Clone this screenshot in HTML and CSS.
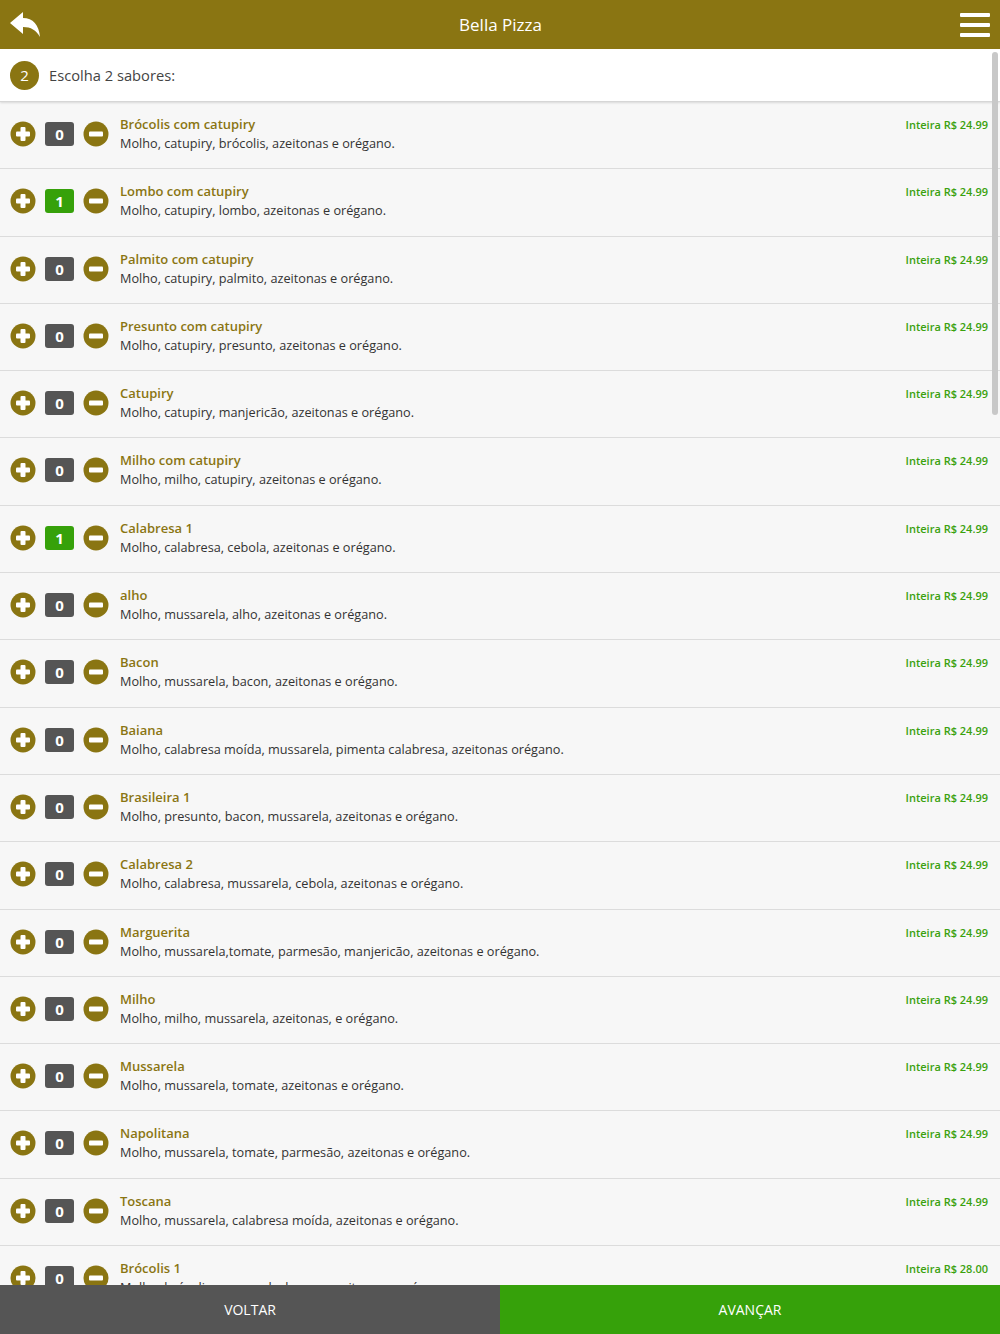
FILE: index.html
```
<!DOCTYPE html>
<html lang="pt-BR">
<head>
    <meta charset="UTF-8">
    <meta name="viewport" content="width=device-width, initial-scale=1.0">
    <title>Bella Pizza</title>
    <link rel="stylesheet" href="styles.css">
</head>
<body>
    <div class="app">
        <header class="topbar">
            <button class="back-btn" aria-label="Voltar">
                <svg width="32" height="28" viewBox="0 0 32 28">
                    <path d="M1 12 L14 1 L14 7 C24 7 30 14 31 26 C27 19 22 16 14 16 L14 23 Z" fill="#fff"/>
                </svg>
            </button>
            <h1 class="title">Bella Pizza</h1>
            <button class="menu-btn" aria-label="Menu">
                <span></span><span></span><span></span>
            </button>
        </header>

        <div class="content">
            <div class="step">
                <span class="step-num">2</span>
                <span class="step-text">Escolha 2 sabores:</span>
            </div>

            <ul id="list" class="list"></ul>

            <div class="scroll-thumb"></div>
        </div>

        <footer class="actions">
            <button class="btn-back">VOLTAR</button>
            <button class="btn-next">AVANÇAR</button>
        </footer>
    </div>

    <script>
        const flavors = [
            { name: 'Brócolis com catupiry', desc: 'Molho, catupiry, brócolis, azeitonas e orégano.', qty: 0, price: '24.99' },
            { name: 'Lombo com catupiry', desc: 'Molho, catupiry, lombo, azeitonas e orégano.', qty: 1, price: '24.99' },
            { name: 'Palmito com catupiry', desc: 'Molho, catupiry, palmito, azeitonas e orégano.', qty: 0, price: '24.99' },
            { name: 'Presunto com catupiry', desc: 'Molho, catupiry, presunto, azeitonas e orégano.', qty: 0, price: '24.99' },
            { name: 'Catupiry', desc: 'Molho, catupiry, manjericão, azeitonas e orégano.', qty: 0, price: '24.99' },
            { name: 'Milho com catupiry', desc: 'Molho, milho, catupiry, azeitonas e orégano.', qty: 0, price: '24.99' },
            { name: 'Calabresa 1', desc: 'Molho, calabresa, cebola, azeitonas e orégano.', qty: 1, price: '24.99' },
            { name: 'alho', desc: 'Molho, mussarela, alho, azeitonas e orégano.', qty: 0, price: '24.99' },
            { name: 'Bacon', desc: 'Molho, mussarela, bacon, azeitonas e orégano.', qty: 0, price: '24.99' },
            { name: 'Baiana', desc: 'Molho, calabresa moída, mussarela, pimenta calabresa, azeitonas orégano.', qty: 0, price: '24.99' },
            { name: 'Brasileira 1', desc: 'Molho, presunto, bacon, mussarela, azeitonas e orégano.', qty: 0, price: '24.99' },
            { name: 'Calabresa 2', desc: 'Molho, calabresa, mussarela, cebola, azeitonas e orégano.', qty: 0, price: '24.99' },
            { name: 'Marguerita', desc: 'Molho, mussarela,tomate, parmesão, manjericão, azeitonas e orégano.', qty: 0, price: '24.99' },
            { name: 'Milho', desc: 'Molho, milho, mussarela, azeitonas, e orégano.', qty: 0, price: '24.99' },
            { name: 'Mussarela', desc: 'Molho, mussarela, tomate, azeitonas e orégano.', qty: 0, price: '24.99' },
            { name: 'Napolitana', desc: 'Molho, mussarela, tomate, parmesão, azeitonas e orégano.', qty: 0, price: '24.99' },
            { name: 'Toscana', desc: 'Molho, mussarela, calabresa moída, azeitonas e orégano.', qty: 0, price: '24.99' },
            { name: 'Brócolis 1', desc: 'Molho, brócolis, mussarela, bacon, azeitonas e orégano.', qty: 0, price: '28.00' }
        ];

        const plusIcon = '<svg width="26" height="26" viewBox="0 0 26 26"><circle cx="13" cy="13" r="12.5" fill="#8a7512"/><rect x="6" y="10.5" width="14" height="5" rx="1" fill="#fff"/><rect x="10.5" y="6" width="5" height="14" rx="1" fill="#fff"/></svg>';
        const minusIcon = '<svg width="26" height="26" viewBox="0 0 26 26"><circle cx="13" cy="13" r="12.5" fill="#8a7512"/><rect x="6" y="10.5" width="14" height="5" rx="1" fill="#fff"/></svg>';

        function render() {
            const list = document.getElementById('list');
            list.innerHTML = '';

            flavors.forEach((f) => {
                const li = document.createElement('li');
                li.className = 'item';

                const qtyClass = f.qty > 0 ? 'qty qty-on' : 'qty';

                li.innerHTML =
                    '<div class="stepper">' +
                        '<button class="round-btn plus">' + plusIcon + '</button>' +
                        '<span class="' + qtyClass + '">' + f.qty + '</span>' +
                        '<button class="round-btn minus">' + minusIcon + '</button>' +
                    '</div>' +
                    '<div class="info">' +
                        '<div class="name">' + f.name + '</div>' +
                        '<div class="desc">' + f.desc + '</div>' +
                    '</div>' +
                    '<div class="price">Inteira R$ ' + f.price + '</div>';

                li.querySelector('.plus').onclick = () => { f.qty++; render(); };
                li.querySelector('.minus').onclick = () => { if (f.qty > 0) { f.qty--; render(); } };

                list.appendChild(li);
            });
        }

        render();
    </script>
</body>
</html>
```

FILE: styles.css
```
* {
    box-sizing: border-box;
}

body {
    margin: 0;
    font-family: "Open Sans", "Noto Sans", sans-serif;
    background: #f7f7f7;
    color: #333;
}

button {
    font-family: inherit;
    border: none;
    background: none;
    padding: 0;
    cursor: pointer;
}

.app {
    display: flex;
    flex-direction: column;
    height: 100vh;
}

.topbar {
    height: 49px;
    flex-shrink: 0;
    background: #8a7512;
    display: flex;
    align-items: center;
    justify-content: space-between;
    padding: 0 10px 0 9px;
}

.back-btn {
    width: 32px;
    height: 28px;
    display: flex;
}

.title {
    margin: 0;
    color: #fff;
    font-size: 17px;
    font-weight: 400;
}

.menu-btn {
    width: 30px;
    height: 26px;
    display: flex;
    flex-direction: column;
    justify-content: space-between;
    padding: 1px 0;
}

.menu-btn span {
    display: block;
    height: 4px;
    background: #fff;
    border-radius: 1px;
}

.content {
    flex: 1;
    overflow: hidden;
    position: relative;
}

.step {
    height: 53px;
    background: #fff;
    display: flex;
    align-items: center;
    gap: 10px;
    padding: 0 10px;
    border-bottom: 1px solid #d6d6d6;
    box-shadow: 0 1px 2px rgba(0,0,0,0.12);
    position: relative;
    z-index: 2;
}

.step-num {
    width: 29px;
    height: 29px;
    border-radius: 50%;
    background: #8a7512;
    color: #fff;
    font-size: 15px;
    display: flex;
    align-items: center;
    justify-content: center;
}

.step-text {
    font-size: 14.7px;
    color: #444;
}

.list {
    list-style: none;
    margin: 0;
    padding: 0;
}

.item {
    height: 67.31px;
    border-bottom: 1px solid #dcdcdc;
    display: flex;
    align-items: flex-start;
    padding: 13px 12px 0 10px;
}

.stepper {
    display: flex;
    align-items: center;
    gap: 9px;
    margin-top: 6px;
}

.round-btn {
    width: 26px;
    height: 26px;
    display: flex;
}

.qty {
    width: 29px;
    height: 24px;
    border-radius: 3px;
    background: #555;
    color: #fff;
    font-size: 15px;
    font-weight: 700;
    display: flex;
    align-items: center;
    justify-content: center;
}

.qty-on {
    background: #36a10a;
}

.info {
    flex: 1;
    margin-left: 11px;
}

.name {
    color: #8a7512;
    font-size: 13px;
    font-weight: 600;
    line-height: 19px;
}

.desc {
    color: #333;
    font-size: 12.7px;
    line-height: 19px;
}

.price {
    color: #3aa10e;
    font-size: 11px;
    font-weight: 600;
    line-height: 19px;
}

.scroll-thumb {
    position: absolute;
    top: 3px;
    right: 2px;
    width: 6px;
    height: 363px;
    border-radius: 3px;
    background: #c8c8c8;
    z-index: 3;
}

.actions {
    height: 49px;
    flex-shrink: 0;
    display: flex;
}

.actions button {
    flex: 1;
    color: #fff;
    font-size: 14px;
}

.btn-back {
    background: #555;
}

.btn-next {
    background: #36a10a;
}
```
